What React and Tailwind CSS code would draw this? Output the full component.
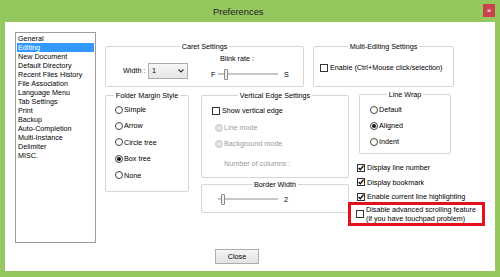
import React from 'react';

const GroupBox = ({ title, className = '', children }) => (
  <div className={`border border-[#d6d6d6] rounded-[2px] ${className}`}>
    <div className="-mt-[5px] h-[9px] flex justify-center">
      <span className="bg-white px-[2px]">{title}</span>
    </div>
    {children}
  </div>
);

const Radio = ({ label, checked, disabled }) => (
  <div className="flex items-center h-[9px]">
    <span
      className={`w-[8px] h-[8px] rounded-full border flex items-center justify-center shrink-0 ${
        disabled ? 'border-[#c6c6c6] bg-[#e4e4e4]' : 'border-[#444] bg-white'
      }`}
    >
      {checked && <span className="w-[4px] h-[4px] rounded-full bg-[#111]" />}
    </span>
    <span className={`ml-[1px] ${disabled ? 'text-[#9a9a9a]' : ''}`}>{label}</span>
  </div>
);

const Check = ({ label, checked, className = '' }) => (
  <div className={`flex items-center ${className}`}>
    <span className="w-[8px] h-[8px] border border-[#333] bg-white flex items-center justify-center shrink-0">
      {checked && (
        <svg width="6" height="6" viewBox="0 0 6 6">
          <path d="M0.6 3 L2.3 4.8 L5.5 0.7" stroke="#111" strokeWidth="1.4" fill="none" />
        </svg>
      )}
    </span>
    <span className="ml-[2px]">{label}</span>
  </div>
);

const Slider = ({ offset }) => (
  <div className="flex items-center w-[60px] h-[12px]">
    <span className="h-[2px] bg-[#c8c8c8]" style={{ width: offset }} />
    <span className="w-[4px] h-[11px] border border-[#8a8a8a] bg-[#f2f2f2] rounded-[1px] shrink-0" />
    <span className="flex-1 h-[2px] bg-[#c8c8c8]" />
  </div>
);

const items = [
  'General',
  'Editing',
  'New Document',
  'Default Directory',
  'Recent Files History',
  'File Association',
  'Language Menu',
  'Tab Settings',
  'Print',
  'Backup',
  'Auto-Completion',
  'Multi-Instance',
  'Delimiter',
  'MISC.',
];

export default function App() {
  return (
    <div className="w-[500px] h-[277px] bg-[#94c85f] flex flex-col overflow-hidden font-['Liberation_Sans',Arial,sans-serif] text-[7.2px] leading-[9px] text-black">
      {/* title bar */}
      <div className="h-[22px] flex items-center shrink-0">
        <span className="ml-[213px] text-[9.4px] text-[#222]">Preferences</span>
        <span className="ml-auto mr-[5px] -mt-[1px] w-[12px] h-[13px] bg-[#c9424a] text-white text-[8px] leading-[13px] text-center">
          ×
        </span>
      </div>

      {/* client */}
      <div className="mx-[5px] h-[249px] bg-white flex">
        {/* category list */}
        <div className="ml-[10px] mt-[10px] w-[81px] h-[211px] border border-[#9c9c9c] px-[1px] pt-[1px]">
          {items.map((it) => (
            <div
              key={it}
              className={`h-[9px] pl-[1px] whitespace-nowrap ${it === 'Editing' ? 'bg-[#3399ff] text-white' : ''}`}
            >
              {it}
            </div>
          ))}
        </div>

        {/* settings */}
        <div className="ml-[9px] mt-[24px] flex flex-col">
          <div className="flex">
            <GroupBox title="Caret Settings" className="w-[199px] h-[41px]">
              <div className="flex pl-[17px]">
                <div className="flex items-center mt-[10px]">
                  <span className="w-[25px]">Width :</span>
                  <div className="w-[40px] h-[16px] border border-[#acacac] bg-gradient-to-b from-[#f6f6f6] to-[#e6e6e6] flex items-center pl-[3px] pr-[3px]">
                    <span>1</span>
                    <svg className="ml-auto" width="6" height="4" viewBox="0 0 6 4">
                      <path d="M0.5 0.5 L3 3 L5.5 0.5" stroke="#333" strokeWidth="1.1" fill="none" />
                    </svg>
                  </div>
                </div>
                <div className="ml-[23px] mt-[3px] flex flex-col">
                  <span className="pl-[9px]">Blink rate :</span>
                  <div className="flex items-center mt-[5px]">
                    <span className="w-[7px]">F</span>
                    <Slider offset={6} />
                    <span className="ml-[6px]">S</span>
                  </div>
                </div>
              </div>
            </GroupBox>

            <GroupBox title="Multi-Editing Settings" className="ml-[9px] w-[141px] h-[41px]">
              <Check className="mt-[12px] pl-[6px]" label="Enable (Ctrl+Mouse click/selection)" />
            </GroupBox>
          </div>

          <div className="flex items-start mt-[8px]">
            <GroupBox title="Folder Margin Style" className="w-[84px] h-[97px]">
              <div className="flex flex-col gap-[7.4px] mt-[5px] pl-[9px]">
                <Radio label="Simple" />
                <Radio label="Arrow" />
                <Radio label="Circle tree" />
                <Radio label="Box tree" checked />
                <Radio label="None" />
              </div>
            </GroupBox>

            <div className="ml-[12px] flex flex-col">
              <GroupBox title="Vertical Edge Settings" className="w-[148px] h-[83px]">
                <div className="flex flex-col pl-[10px]">
                  <Check className="mt-[6px]" label="Show vertical edge" />
                  <div className="ml-[3px] mt-[8px]">
                    <Radio label="Line mode" disabled />
                  </div>
                  <div className="ml-[3px] mt-[7px]">
                    <Radio label="Background mode" disabled />
                  </div>
                  <span className="ml-[12px] mt-[11px] text-[#9a9a9a]">Number of columns :</span>
                </div>
              </GroupBox>
              <GroupBox title="Border Width" className="mt-[6px] w-[148px] h-[29px]">
                <div className="flex items-center mt-[4px] pl-[16px]">
                  <Slider offset={3} />
                  <span className="ml-[6px]">2</span>
                </div>
              </GroupBox>
            </div>

            <div className="flex flex-col w-[136px]">
              <GroupBox title="Line Wrap" className="ml-[10px] -mt-[1px] w-[92px] h-[60px]">
                <div className="flex flex-col gap-[7px] mt-[6px] pl-[10px]">
                  <Radio label="Default" />
                  <Radio label="Aligned" checked />
                  <Radio label="Indent" />
                </div>
              </GroupBox>
              <div className="flex flex-col gap-[5.5px] mt-[9px] ml-[8px]">
                <Check checked label="Display line number" />
                <Check checked label="Display bookmark" />
                <Check checked label="Enable current line highlighting" />
              </div>
              <div className="-ml-[1px] mt-[1px] w-[137px] h-[24px] border-[3px] border-[#e0121c] flex items-center pl-[5px]">
                <span className="w-[8px] h-[8px] border border-[#333] bg-white shrink-0" />
                <div className="ml-[2px] flex flex-col">
                  <span>Disable advanced scrolling feature</span>
                  <span>(if you have touchpad problem)</span>
                </div>
              </div>
            </div>
          </div>

          <button className="ml-[110px] mt-[23px] w-[44px] h-[15px] border border-[#acacac] bg-gradient-to-b from-[#f4f4f4] to-[#e2e2e2] flex items-center justify-center text-[7.2px] leading-[9px]">
            Close
          </button>
        </div>
      </div>
    </div>
  );
}
